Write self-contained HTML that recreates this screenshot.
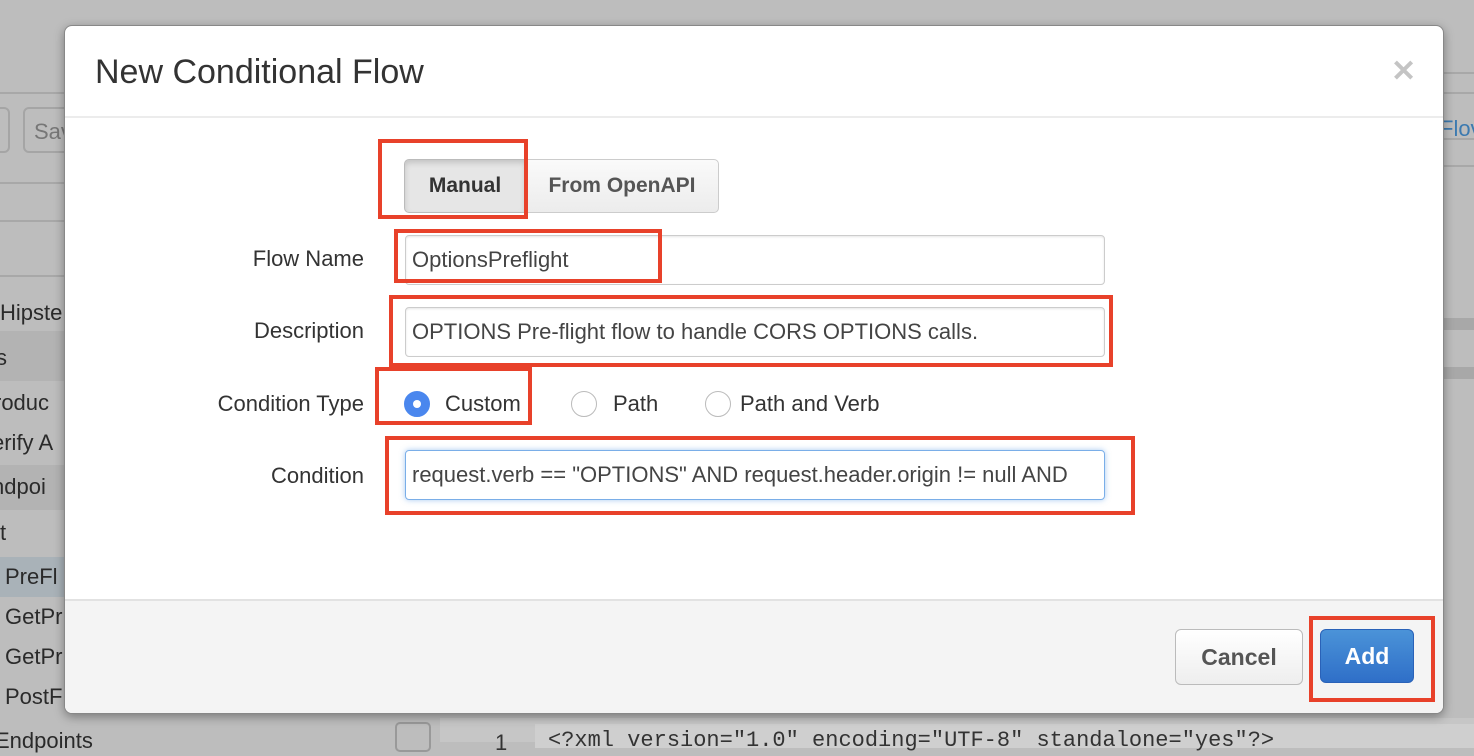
<!DOCTYPE html>
<html><head><meta charset="utf-8"><style>
*{box-sizing:border-box;margin:0;padding:0}
body{width:1474px;height:738px;overflow:hidden;background:#bdbdbd;font-family:"Liberation Sans",sans-serif;position:relative;color:#333}
.a{position:absolute}
.bg{color:#2a2a2a;font-size:22px}
.hl{background:#a9b2b8}
.modal{left:64px;top:25px;width:1380px;height:689px;background:#fff;border-radius:8px;box-shadow:0 3px 10px rgba(0,0,0,.35);overflow:hidden;border:1px solid #888}
.lbl{font-size:22px;color:#333;text-align:right;width:300px;left:64px}
.inp{left:405px;width:700px;height:50px;border:1px solid #ccc;border-radius:4px;font-size:22px;padding:0 6px;line-height:48px;color:#444;white-space:nowrap;overflow:hidden;box-shadow:inset 0 1px 2px rgba(0,0,0,.1)}
.red{border:4px solid #e8412a}
.radio{width:26px;height:26px;border-radius:50%;border:1px solid #bbb;background:#fff}
.rt{font-size:22px;color:#333}
</style></head><body>
<div class="a" style="left:0;top:92px;width:1474px;height:2px;background:#a8a8a8"></div>
<div class="a" style="left:-10px;top:107px;width:20px;height:46px;border:2px solid #a5a5a5;border-radius:6px"></div>
<div class="a" style="left:23px;top:107px;width:60px;height:46px;border:2px solid #a5a5a5;border-radius:6px;font-size:22px;color:#777;padding:10px 9px">Sav</div>
<div class="a" style="left:0;top:182px;width:64px;height:2px;background:#a8a8a8"></div>
<div class="a" style="left:0;top:220px;width:64px;height:2px;background:#a8a8a8"></div>
<div class="a" style="left:0;top:275px;width:64px;height:2px;background:#a8a8a8"></div>
<div class="a" style="left:0;top:331px;width:64px;height:50px;background:#b3b3b3"></div>
<div class="a bg" style="left:0;top:300px">Hipste</div>
<div class="a bg" style="left:-4px;top:345px">s</div>
<div class="a bg" style="left:-6px;top:390px">roduc</div>
<div class="a bg" style="left:-8px;top:430px">erify A</div>
<div class="a" style="left:0;top:465px;width:64px;height:45px;background:#b3b3b3"></div>
<div class="a bg" style="left:-8px;top:474px">ndpoi</div>
<div class="a bg" style="left:0;top:520px">t</div>
<div class="a hl" style="left:0;top:557px;width:64px;height:40px"></div>
<div class="a bg" style="left:5px;top:564px">PreFl</div>
<div class="a bg" style="left:5px;top:604px">GetPr</div>
<div class="a bg" style="left:5px;top:644px">GetPr</div>
<div class="a bg" style="left:5px;top:684px">PostF</div>
<div class="a bg" style="left:-5px;top:728px">Endpoints</div>
<div class="a" style="left:1444px;top:72px;width:30px;height:2px;background:#a8a8a8"></div>
<div class="a" style="left:1444px;top:138px;width:30px;height:2px;background:#a8a8a8"></div>
<div class="a" style="left:1444px;top:165px;width:30px;height:2px;background:#a8a8a8"></div>
<div class="a" style="left:1440px;top:116px;font-size:22px;color:#3c7ab0">Flov</div>
<div class="a" style="left:1444px;top:318px;width:30px;height:12px;background:#a8a8a8"></div>
<div class="a" style="left:1444px;top:367px;width:30px;height:12px;background:#a8a8a8"></div>
<div class="a" style="left:395px;top:722px;width:36px;height:30px;border:2px solid #999;border-radius:5px"></div>
<div class="a" style="left:440px;top:718px;width:1034px;height:24px;background:#c6c6c6"></div>
<div class="a" style="left:535px;top:724px;width:939px;height:24px;background:#cfcfcf"></div>
<div class="a" style="left:495px;top:730px;font-size:22px;color:#333">1</div>
<div class="a" style="left:548px;top:728px;font-family:'Liberation Mono',monospace;font-size:22px;color:#333;white-space:nowrap">&lt;?xml version="1.0" encoding="UTF-8" standalone="yes"?&gt;</div>

<div class="a modal">
  <div class="a" style="left:30px;top:27px;font-size:34px;color:#333">New Conditional Flow</div>
  <div class="a" style="left:1326px;top:28px;font-size:30px;color:#c4c4c4;font-weight:bold">✕</div>
  <div class="a" style="left:0;top:90px;width:1380px;height:2px;background:#ececec"></div>
  <div class="a" style="left:0;top:573px;width:1380px;height:116px;background:#f4f4f4;border-top:2px solid #e2e2e2"></div>
</div>

<div class="a" style="left:404px;top:159px;width:122px;height:54px;background:#e6e6e6;border:1px solid #bbb;border-radius:5px 0 0 5px;box-shadow:inset 0 3px 6px rgba(0,0,0,.15);font-weight:bold;font-size:21px;text-align:center;line-height:52px;color:#333">Manual</div>
<div class="a" style="left:525px;top:159px;width:194px;height:54px;background:linear-gradient(#fafafa,#ececec);border:1px solid #ccc;border-radius:0 5px 5px 0;font-weight:bold;font-size:21px;text-align:center;line-height:52px;color:#555">From OpenAPI</div>

<div class="a lbl" style="top:246px">Flow Name</div>
<div class="a inp" style="top:235px">OptionsPreflight</div>
<div class="a lbl" style="top:318px">Description</div>
<div class="a inp" style="top:307px">OPTIONS Pre-flight flow to handle CORS OPTIONS calls.</div>
<div class="a lbl" style="top:391px">Condition Type</div>
<div class="a radio" style="left:404px;top:391px;background:#4a87ee;border-color:#4a87ee"><div class="a" style="left:8px;top:8px;width:8px;height:8px;border-radius:50%;background:#fff"></div></div>
<div class="a rt" style="left:445px;top:391px">Custom</div>
<div class="a radio" style="left:571px;top:391px"></div>
<div class="a rt" style="left:613px;top:391px">Path</div>
<div class="a radio" style="left:705px;top:391px"></div>
<div class="a rt" style="left:740px;top:391px">Path and Verb</div>
<div class="a lbl" style="top:463px">Condition</div>
<div class="a inp" style="top:450px;border-color:#7aaee8;box-shadow:0 0 6px rgba(80,150,230,.5)">request.verb == "OPTIONS" AND request.header.origin != null AND</div>

<div class="a" style="left:1175px;top:629px;width:128px;height:56px;border:1px solid #bbb;border-radius:6px;background:linear-gradient(#fff,#eee);font-weight:bold;font-size:23px;color:#555;text-align:center;line-height:54px">Cancel</div>
<div class="a" style="left:1320px;top:629px;width:94px;height:54px;border:1px solid #2a62b8;border-radius:6px;background:linear-gradient(#4b93d8,#2f6fc8);font-weight:bold;font-size:23px;color:#fff;text-align:center;line-height:52px">Add</div>

<div class="a red" style="left:378px;top:139px;width:150px;height:80px"></div>
<div class="a red" style="left:394px;top:229px;width:268px;height:54px"></div>
<div class="a red" style="left:389px;top:295px;width:724px;height:72px"></div>
<div class="a red" style="left:375px;top:367px;width:157px;height:58px"></div>
<div class="a red" style="left:385px;top:436px;width:750px;height:79px"></div>
<div class="a red" style="left:1309px;top:616px;width:126px;height:86px"></div>
</body></html>
